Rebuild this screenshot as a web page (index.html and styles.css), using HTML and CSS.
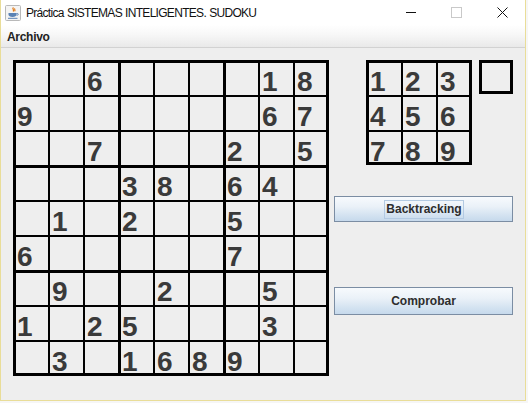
FILE: index.html
```html
<!DOCTYPE html>
<html>
<head>
<meta charset="utf-8">
<link rel="stylesheet" href="styles.css">
</head>
<body>
<div class="window">
  <div class="titlebar">
    <svg class="appicon" width="16" height="16" viewBox="0 0 16 16">
      <rect x="0.5" y="0.5" width="15" height="15" rx="1" fill="#f4f4f4" stroke="#b9b9b9"/>
      <path d="M8.5 2.5c-2 1.2 1.5 2.2-0.5 4M10 3.5c-1.2 0.9 0.9 1.6-0.4 2.8" stroke="#e07b1a" stroke-width="1.2" fill="none"/>
      <path d="M3.5 8h8v1.5c0 1.5-1.5 2.5-4 2.5s-4-1-4-2.5z" fill="#5a82b5"/>
      <path d="M11.5 8.5h1c1 0 1 1.6 0 1.6h-1" stroke="#5a82b5" fill="none"/>
      <rect x="3" y="12.8" width="9.5" height="1" fill="#5a82b5"/>
    </svg>
    <span class="title">Práctica SISTEMAS INTELIGENTES. SUDOKU</span>
    <div class="winbtns">
      <span class="wb min"></span>
      <span class="wb max"></span>
      <svg class="wb close" width="11" height="11" viewBox="0 0 11 11"><path d="M0.5 0.5L10.5 10.5M10.5 0.5L0.5 10.5" stroke="#111" stroke-width="1"/></svg>
    </div>
  </div>
  <div class="menubar"><span class="menu">Archivo</span></div>
  <div class="content">
    <div class="board">
      <div class="c"></div><div class="c"></div><div class="c">6</div><div class="c"></div><div class="c"></div><div class="c"></div><div class="c"></div><div class="c">1</div><div class="c">8</div>
      <div class="c">9</div><div class="c"></div><div class="c"></div><div class="c"></div><div class="c"></div><div class="c"></div><div class="c"></div><div class="c">6</div><div class="c">7</div>
      <div class="c"></div><div class="c"></div><div class="c">7</div><div class="c"></div><div class="c"></div><div class="c"></div><div class="c">2</div><div class="c"></div><div class="c">5</div>
      <div class="c"></div><div class="c"></div><div class="c"></div><div class="c">3</div><div class="c">8</div><div class="c"></div><div class="c">6</div><div class="c">4</div><div class="c"></div>
      <div class="c"></div><div class="c">1</div><div class="c"></div><div class="c">2</div><div class="c"></div><div class="c"></div><div class="c">5</div><div class="c"></div><div class="c"></div>
      <div class="c">6</div><div class="c"></div><div class="c"></div><div class="c"></div><div class="c"></div><div class="c"></div><div class="c">7</div><div class="c"></div><div class="c"></div>
      <div class="c"></div><div class="c">9</div><div class="c"></div><div class="c"></div><div class="c">2</div><div class="c"></div><div class="c"></div><div class="c">5</div><div class="c"></div>
      <div class="c">1</div><div class="c"></div><div class="c">2</div><div class="c">5</div><div class="c"></div><div class="c"></div><div class="c"></div><div class="c">3</div><div class="c"></div>
      <div class="c"></div><div class="c">3</div><div class="c"></div><div class="c">1</div><div class="c">6</div><div class="c">8</div><div class="c">9</div><div class="c"></div><div class="c"></div>
    </div>
    <div class="side">
      <div class="toprow">
        <div class="palette">
          <div class="p">1</div><div class="p">2</div><div class="p">3</div>
          <div class="p">4</div><div class="p">5</div><div class="p">6</div>
          <div class="p">7</div><div class="p">8</div><div class="p">9</div>
        </div>
        <div class="selbox"></div>
      </div>
      <button class="btn btn-back"><span class="focus">Backtracking</span></button>
      <button class="btn btn-check">Comprobar</button>
    </div>
  </div>
</div>
</body>
</html>
```
FILE: styles.css
```css
html, body {
  margin: 0;
  padding: 0;
  background: #f6f6f6;
}
.window {
  width: 524px;
  height: 400px;
  border-left: 1px solid #e9dd98;
  border-right: 1px solid #e9dd98;
  border-bottom: 1px solid #e9dd98;
  background: #eeeeee;
  display: flex;
  flex-direction: column;
  font-family: "Liberation Sans", Arial, sans-serif;
}
.titlebar {
  height: 25px;
  background: #ffffff;
  display: flex;
  align-items: center;
  position: relative;
}
.appicon {
  margin-left: 4px;
  margin-top: 1px;
}
.title {
  margin-left: 5px;
  font-family: "Liberation Sans", Arial, sans-serif;
  font-size: 12px;
  letter-spacing: -0.7px;
  word-spacing: 0.5px;
  color: #111;
  margin-top: 1px;
}
.winbtns {
  margin-left: auto;
  display: flex;
  align-items: center;
  height: 25px;
}
.wb {
  display: block;
}
.min {
  width: 10px;
  height: 1px;
  background: #111;
  margin-right: 35px;
  margin-top: -1px;
}
.max {
  width: 9px;
  height: 9px;
  border: 1px solid #c9c9c9;
  margin-right: 35px;
  margin-top: -1px;
}
.close {
  margin-right: 17px;
  margin-top: -1px;
}
.menubar {
  height: 22px;
  background: linear-gradient(#ffffff 0%, #f7f7f7 45%, #e9e9e9 100%);
  border-bottom: 1px solid #d2d2d2;
  display: flex;
  align-items: center;
}
.menu {
  margin-left: 6px;
  font-weight: bold;
  font-size: 12px;
  letter-spacing: -0.3px;
  color: #222;
  margin-top: 1px;
}
.content {
  flex: 1;
  display: flex;
  align-items: flex-start;
  padding: 12px 0 0 12px;
  background: #eeeeee;
}
.board {
  display: grid;
  grid-template-columns: repeat(8, 35px) 33px;
  grid-template-rows: repeat(8, 35px) 33px;
  border-right: 3px solid #000;
  border-bottom: 3px solid #000;
}
.c {
  box-sizing: border-box;
  border-left: 2px solid #000;
  border-top: 2px solid #000;
  padding: 6px 0 0 2px;
  font-weight: bold;
  font-size: 28px;
  line-height: 28px;
  color: #3a3a3a;
  overflow: visible;
}
.c:nth-child(9n+1),
.c:nth-child(9n+4),
.c:nth-child(9n+7) {
  border-left-width: 3px;
  padding-left: 1px;
}
.c:nth-child(-n+9),
.c:nth-child(n+28):nth-child(-n+36),
.c:nth-child(n+55):nth-child(-n+63) {
  border-top-width: 3px;
  padding-top: 5px;
}
.side {
  margin-left: 5px;
  width: 179px;
  display: flex;
  flex-direction: column;
}
.toprow {
  display: flex;
  align-items: flex-start;
}
.palette {
  margin-left: 32px;
  display: grid;
  grid-template-columns: 35px 35px 33px;
  grid-template-rows: 35px 35px 32px;
  border-right: 3px solid #000;
  border-bottom: 3px solid #000;
}
.p {
  box-sizing: border-box;
  border-left: 2px solid #000;
  border-top: 2px solid #000;
  padding: 6px 0 0 2px;
  font-weight: bold;
  font-size: 28px;
  line-height: 28px;
  color: #3a3a3a;
}
.p:nth-child(3n+1) {
  border-left-width: 3px;
  padding-left: 1px;
}
.p:nth-child(-n+3) {
  border-top-width: 3px;
  padding-top: 5px;
}
.selbox {
  margin-left: 7px;
  width: 35px;
  height: 34px;
  box-sizing: border-box;
  border: 3px solid #000;
}
.btn {
  width: 179px;
  box-sizing: border-box;
  border: 1px solid #7b8da3;
  border-radius: 0;
  background: linear-gradient(#f7fafd 0%, #eaf1f8 40%, #d4e3f1 75%, #c6d9ec 100%);
  font-family: "Liberation Sans", Arial, sans-serif;
  font-weight: bold;
  font-size: 12px;
  color: #2d2d2d;
  padding: 0;
  display: flex;
  align-items: center;
  justify-content: center;
}
.btn-back {
  margin-top: 31px;
  height: 26px;
}
.focus {
  border: 1px solid #b3cae2;
  padding: 1px 1px 2px 1px;
  line-height: 14px;
  margin-left: 1px;
}
.btn-check {
  margin-top: 65px;
  height: 28px;
}
```
